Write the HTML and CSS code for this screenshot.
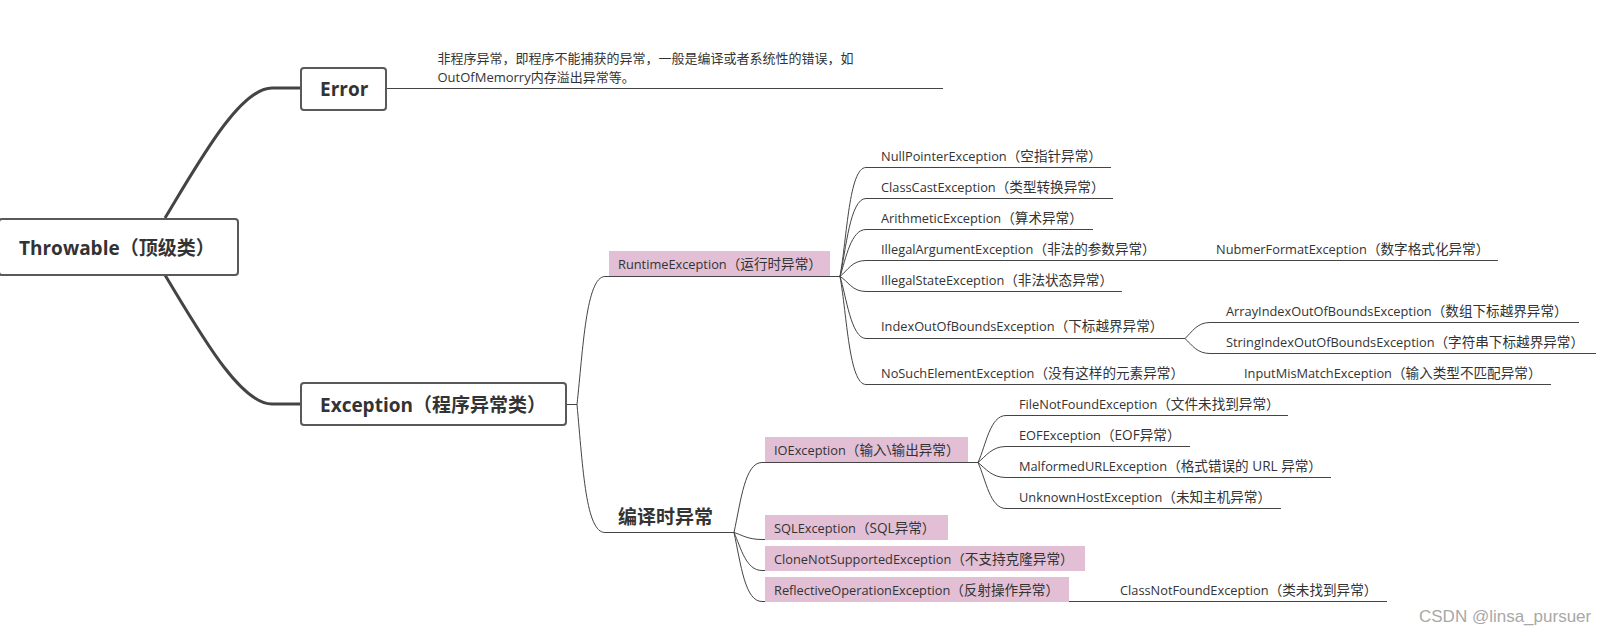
FILE: index.html
```html
<!DOCTYPE html>
<html lang="zh-CN">
<head>
<meta charset="utf-8">
<title>Throwable</title>
<link rel="stylesheet" href="styles.css">
</head>
<body>
<main class="canvas">
  <svg class="links" width="1618" height="636" viewBox="0 0 1618 636">
    <g class="thick">
      <path d="M165 218C200 160 240 88 272 88L300 88"/>
      <path d="M165 275C200 333 240 404 272 404L300 404"/>
    </g>
    <g class="thin">
      <path d="M387 88.5H943"/>
      <path d="M567 404.5H577C583 350 586 276.5 605 276.5H840"/>
      <path d="M577 404.5C583 470 586 532.5 605 532.5H734"/>
      <path d="M840 276.5C847 238 849 167.5 866 167.5H1111"/>
      <path d="M840 276.5C846 250 850 198.5 866 198.5H1113"/>
      <path d="M840 276.5C846 258 851 229.5 866 229.5H1093"/>
      <path d="M840 276.5C848 270 852 260.5 866 260.5H1498"/>
      <path d="M840 276.5C848 281 852 291.5 866 291.5H1122"/>
      <path d="M840 276.5C846 295 851 338.5 866 338.5H1185"/>
      <path d="M840 276.5C847 315 849 384.5 866 384.5H1551"/>
      <path d="M1185 338.5C1192 332 1197 322.5 1210 322.5H1579"/>
      <path d="M1185 338.5C1192 345 1197 353.5 1210 353.5H1596"/>
      <path d="M734 532.5C741 500 745 462.5 762 462.5H978"/>
      <path d="M734 532.5C742 535 748 539.5 762 539.5H948"/>
      <path d="M734 532.5C741 548 746 570.5 762 570.5H1085"/>
      <path d="M734 532.5C741 565 745 601.5 762 601.5H1387"/>
      <path d="M978 462.5C986 445 990 415.5 1006 415.5H1288"/>
      <path d="M978 462.5C986 456 992 446.5 1006 446.5H1190"/>
      <path d="M978 462.5C986 469 992 477.5 1006 477.5H1331"/>
      <path d="M978 462.5C986 480 990 508.5 1006 508.5H1281"/>
    </g>
  </svg>

  <div class="box box-root">Throwable（顶级类）</div>
  <div class="box box-error">Error</div>
  <div class="box box-exception">Exception（程序异常类）</div>
  <p class="note">非程序异常，即程序不能捕获的异常，一般是编译或者系统性的错误，如<br>OutOfMemorry内存溢出异常等。</p>
  <div class="heading">编译时异常</div>

  <div class="tag tag-runtime">RuntimeException<span class="zh">（运行时异常）</span></div>
  <div class="tag tag-io">IOException<span class="zh">（输入\输出异常）</span></div>
  <div class="tag tag-sql">SQLException<span class="zh">（SQL异常）</span></div>
  <div class="tag tag-clone">CloneNotSupportedException<span class="zh">（不支持克隆异常）</span></div>
  <div class="tag tag-reflect">ReflectiveOperationException<span class="zh">（反射操作异常）</span></div>

  <div class="leaf col-a r1">NullPointerException<span class="zh">（空指针异常）</span></div>
  <div class="leaf col-a r2">ClassCastException<span class="zh">（类型转换异常）</span></div>
  <div class="leaf col-a r3">ArithmeticException<span class="zh">（算术异常）</span></div>
  <div class="leaf col-a r4">IllegalArgumentException<span class="zh">（非法的参数异常）</span></div>
  <div class="leaf col-a r5">IllegalStateException<span class="zh">（非法状态异常）</span></div>
  <div class="leaf col-a r6">IndexOutOfBoundsException<span class="zh">（下标越界异常）</span></div>
  <div class="leaf col-a r7">NoSuchElementException<span class="zh">（没有这样的元素异常）</span></div>

  <div class="leaf col-num r4">NubmerFormatException<span class="zh">（数字格式化异常）</span></div>
  <div class="leaf col-arr r8">ArrayIndexOutOfBoundsException<span class="zh">（数组下标越界异常）</span></div>
  <div class="leaf col-arr r9">StringIndexOutOfBoundsException<span class="zh">（字符串下标越界异常）</span></div>
  <div class="leaf col-input r7">InputMisMatchException<span class="zh">（输入类型不匹配异常）</span></div>

  <div class="leaf col-b r10">FileNotFoundException<span class="zh">（文件未找到异常）</span></div>
  <div class="leaf col-b r11">EOFException<span class="zh">（EOF异常）</span></div>
  <div class="leaf col-b r12">MalformedURLException<span class="zh">（格式错误的 URL 异常）</span></div>
  <div class="leaf col-b r13">UnknownHostException<span class="zh">（未知主机异常）</span></div>
  <div class="leaf col-class r14">ClassNotFoundException<span class="zh">（类未找到异常）</span></div>

  <div class="mark">CSDN @linsa_pursuer</div>
</main>
</body>
</html>
```

FILE: styles.css
```css
html, body {
  margin: 0;
  padding: 0;
  background: #fff;
}

.canvas {
  position: relative;
  width: 1618px;
  height: 636px;
  overflow: hidden;
  font-family: "Open Sans", "Noto Sans CJK SC", sans-serif;
  font-size: 13px;
  color: #333;
}

.links {
  position: absolute;
  left: 0;
  top: 0;
}

.links path {
  fill: none;
}

.thick path {
  stroke: #444;
  stroke-width: 3;
}

.thin path {
  stroke: #444;
  stroke-width: 1;
}

.box {
  position: absolute;
  box-sizing: border-box;
  display: flex;
  align-items: center;
  background: #fff;
  border: 2px solid #595959;
  border-radius: 4px;
  font-weight: 700;
  font-size: 19px;
  white-space: nowrap;
}

.box-root {
  left: -2px;
  top: 218px;
  width: 241px;
  height: 58px;
  padding-left: 19px;
}

.box-error {
  left: 300px;
  top: 67px;
  width: 87px;
  height: 44px;
  padding-left: 18px;
}

.box-exception {
  left: 300px;
  top: 382px;
  width: 267px;
  height: 44px;
  padding-left: 18px;
}

.note {
  position: absolute;
  left: 437.5px;
  top: 49px;
  margin: 0;
  line-height: 18.6px;
  white-space: nowrap;
}

.heading {
  position: absolute;
  left: 618px;
  top: 504px;
  font-size: 19px;
  line-height: 26px;
  font-weight: 700;
}

.tag {
  position: absolute;
  box-sizing: border-box;
  height: 25px;
  padding-left: 9px;
  background: #e2bfd5;
  font-size: 12.8px;
  line-height: 25px;
  white-space: nowrap;
}

.tag-runtime { left: 609px; top: 251px; width: 221px; }
.tag-io { left: 765px; top: 437px; width: 203px; }
.tag-sql { left: 765px; top: 515px; width: 183px; }
.tag-clone { left: 765px; top: 546px; width: 320px; }
.tag-reflect { left: 765px; top: 577px; width: 304px; }

.leaf {
  position: absolute;
  line-height: 20px;
  font-size: 12.8px;
  white-space: nowrap;
}

.zh {
  font-size: 13.6px;
}

.col-a { left: 881px; }
.col-num { left: 1216px; }
.col-arr { left: 1226px; }
.col-input { left: 1244px; }
.col-b { left: 1019px; }
.col-class { left: 1120px; }

.r1 { top: 146px; }
.r2 { top: 177px; }
.r3 { top: 208px; }
.r4 { top: 239px; }
.r5 { top: 270px; }
.r6 { top: 316px; }
.r7 { top: 363px; }
.r8 { top: 301px; }
.r9 { top: 332px; }
.r10 { top: 394px; }
.r11 { top: 425px; }
.r12 { top: 456px; }
.r13 { top: 487px; }
.r14 { top: 580px; }

.mark {
  position: absolute;
  left: 1419px;
  top: 606px;
  font-family: "Liberation Sans", sans-serif;
  font-size: 17px;
  line-height: 22px;
  color: #a8a8a8;
  white-space: nowrap;
}
```
